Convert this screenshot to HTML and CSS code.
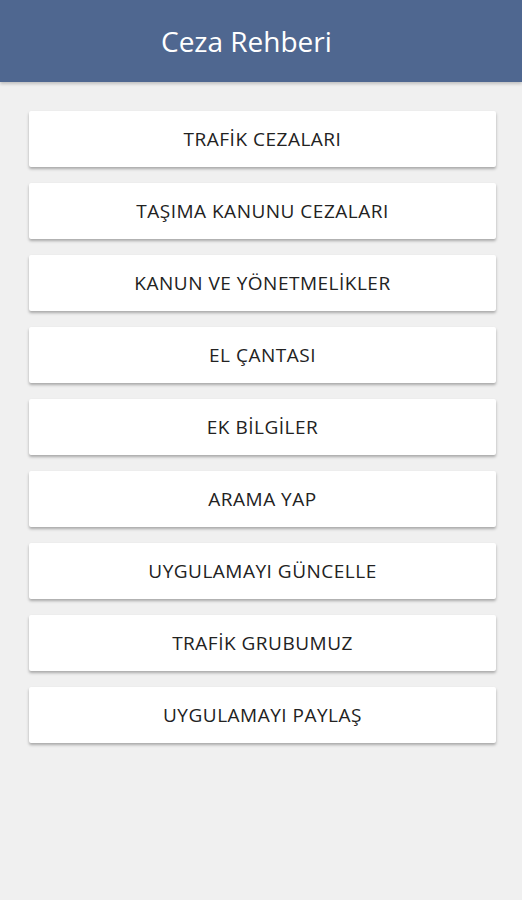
FILE: index.html
```html
<!DOCTYPE html>
<html lang="tr">

<head>
    <meta charset="UTF-8">
    <meta name="viewport" content="width=device-width, initial-scale=1.0">
    <title>Ceza Rehberi</title>
    <link rel="stylesheet" href="styles.css">
</head>

<body>
    <header class="toolbar">
        <h1 class="toolbar-title">Ceza Rehberi</h1>
    </header>

    <main class="menu">
        <button type="button" class="menu-btn">TRAFİK CEZALARI</button>
        <button type="button" class="menu-btn">TAŞIMA KANUNU CEZALARI</button>
        <button type="button" class="menu-btn">KANUN VE YÖNETMELİKLER</button>
        <button type="button" class="menu-btn">EL ÇANTASI</button>
        <button type="button" class="menu-btn">EK BİLGİLER</button>
        <button type="button" class="menu-btn">ARAMA YAP</button>
        <button type="button" class="menu-btn">UYGULAMAYI GÜNCELLE</button>
        <button type="button" class="menu-btn">TRAFİK GRUBUMUZ</button>
        <button type="button" class="menu-btn">UYGULAMAYI PAYLAŞ</button>
    </main>
</body>

</html>
```

FILE: styles.css
```css
body {
    margin: 0;
    padding: 0;
    min-height: 100vh;
    background-color: #f0f0f0;
    font-family: "Open Sans", "Noto Sans", Arial, sans-serif;
}

.toolbar {
    height: 82px;
    background-color: #4f6790;
    box-shadow: 0 2px 3px rgba(0, 0, 0, 0.2);
    display: flex;
    align-items: center;
    padding-left: 161px;
}

.toolbar-title {
    margin: 0;
    color: #ffffff;
    font-size: 28px;
    font-weight: 400;
}

.menu {
    display: flex;
    flex-direction: column;
    gap: 16px;
    padding: 29px 26px 0 29px;
}

.menu-btn {
    height: 56px;
    border: none;
    border-radius: 2px;
    background-color: #ffffff;
    color: #222222;
    font-family: inherit;
    font-size: 19px;
    letter-spacing: 0.5px;
    box-shadow: 0 2px 3px rgba(0, 0, 0, 0.3);
    cursor: pointer;
}
```
